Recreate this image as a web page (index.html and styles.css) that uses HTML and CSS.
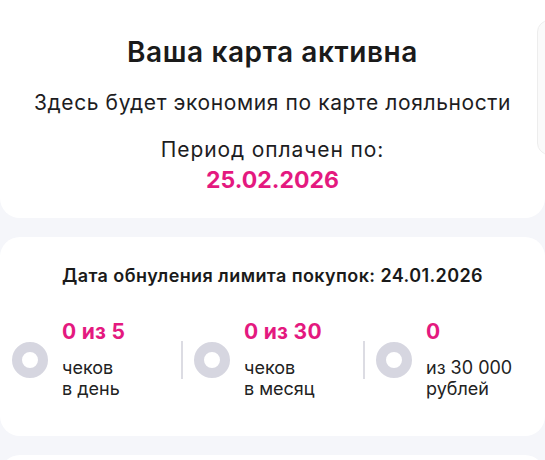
FILE: index.html
```html
<!DOCTYPE html>
<html lang="ru">
<head>
<meta charset="utf-8">
<title>Карта</title>
<link rel="stylesheet" href="styles.css">
</head>
<body>
  <section class="card card-status">
    <div class="slide">
      <h1 class="title">Ваша карта активна</h1>
      <p class="subtitle">Здесь будет экономия по карте лояльности</p>
      <p class="period">Период оплачен по:</p>
      <p class="date">25.02.2026</p>
    </div>
    <div class="slide-next"></div>
  </section>

  <section class="card card-limits">
    <h2 class="limits-title">Дата обнуления лимита покупок: 24.01.2026</h2>
    <div class="stats">
      <div class="stat">
        <span class="ring"></span>
        <div class="stat-text">
          <div class="stat-num">0 из 5</div>
          <div class="stat-label">чеков<br>в день</div>
        </div>
      </div>
      <span class="divider"></span>
      <div class="stat">
        <span class="ring"></span>
        <div class="stat-text">
          <div class="stat-num">0 из 30</div>
          <div class="stat-label">чеков<br>в месяц</div>
        </div>
      </div>
      <span class="divider"></span>
      <div class="stat">
        <span class="ring"></span>
        <div class="stat-text">
          <div class="stat-num">0</div>
          <div class="stat-label">из 30 000<br>рублей</div>
        </div>
      </div>
    </div>
  </section>

  <section class="card card-next"></section>
</body>
</html>
```

FILE: styles.css
```css
* { box-sizing: border-box; }

html, body {
  margin: 0;
  padding: 0;
}

body {
  background: #f5f6fa;
  font-family: "Inter", "Noto Sans", sans-serif;
  color: #1d1d1f;
  width: 545px;
  height: 460px;
  overflow: hidden;
}

.card {
  background: #ffffff;
  border-radius: 20px;
}

.card-status {
  border-radius: 0 0 20px 20px;
  height: 218px;
  display: flex;
  align-items: flex-start;
  overflow: hidden;
}

.slide {
  flex: 0 0 529px;
  margin-left: 8px;
  padding-top: 36px;
  text-align: center;
}

.slide-next {
  flex: 0 0 200px;
  margin-top: 20px;
  height: 135px;
  background: #fafafa;
  border: 1px solid #ededed;
  border-radius: 12px;
}

.title {
  margin: 0;
  font-size: 28px;
  line-height: 32px;
  font-weight: 600;
  letter-spacing: 0.6px;
  color: #1a1a1a;
}

.subtitle {
  margin: 23px 0 0;
  font-size: 21px;
  line-height: 24px;
  font-weight: 400;
  letter-spacing: 0.6px;
}

.period {
  margin: 23px 0 0;
  font-size: 21px;
  line-height: 24px;
  font-weight: 400;
  letter-spacing: 0.9px;
}

.date {
  margin: 4px 0 0;
  font-size: 23px;
  line-height: 28px;
  font-weight: 700;
  color: #e4197f;
}

.card-limits {
  margin-top: 19px;
  height: 199px;
  padding-top: 28px;
}

.limits-title {
  margin: 0;
  text-align: center;
  font-size: 18px;
  line-height: 22px;
  font-weight: 600;
  letter-spacing: 0.4px;
  color: #1a1a1a;
}

.stats {
  display: flex;
  align-items: center;
  padding-left: 12px;
  margin-top: 33px;
}

.stat {
  display: flex;
  align-items: center;
  gap: 14px;
  width: 169px;
}

.ring {
  flex: 0 0 36px;
  width: 36px;
  height: 36px;
  border: 10px solid #d6d6e0;
  border-radius: 50%;
}

.stat-num {
  font-size: 21px;
  line-height: 24px;
  font-weight: 700;
  letter-spacing: 0.3px;
  color: #e4197f;
}

.stat-label {
  margin-top: 13px;
  font-size: 18px;
  line-height: 21px;
  font-weight: 400;
  color: #222222;
}

.divider {
  flex: 0 0 2px;
  width: 2px;
  height: 38px;
  background: #dcdce3;
  margin-right: 11px;
}

.card-next {
  margin-top: 19px;
  height: 120px;
}
```
